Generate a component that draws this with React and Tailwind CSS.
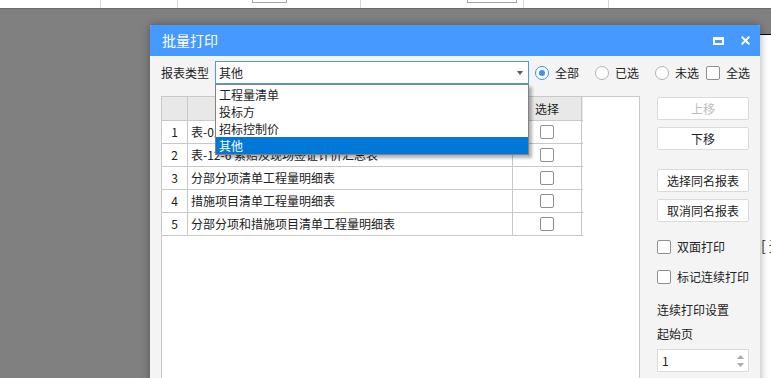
import { X } from 'lucide-react';

const ROWS = [
  { id: 1, name: '表-01 建设项目招标控制价汇总表' },
  { id: 2, name: '表-12-6 索赔及现场签证计价汇总表' },
  { id: 3, name: '分部分项清单工程量明细表' },
  { id: 4, name: '措施项目清单工程量明细表' },
  { id: 5, name: '分部分项和措施项目清单工程量明细表' },
];

const OPTIONS = ['工程量清单', '投标方', '招标控制价', '其他'];

function Box({ className = '' }) {
  return <span className={`block w-[14px] h-[14px] shrink-0 rounded-[2px] border border-[#8f8f8f] bg-white ${className}`} />;
}

function Radio({ checked, label, className = '' }) {
  return (
    <div className={`flex items-center gap-[6px] ${className}`}>
      <span className={`flex w-[14px] h-[14px] items-center justify-center rounded-full border bg-white ${checked ? 'border-[#3f8ff5]' : 'border-[#b4b4b4]'}`}>
        {checked && <span className="block w-[6px] h-[6px] rounded-full bg-[#3f8ff5]" />}
      </span>
      <span>{label}</span>
    </div>
  );
}

function Button({ children, disabled, className = '' }) {
  return (
    <button className={`flex h-[23px] w-full items-center justify-center rounded-[2px] border border-[#dadada] bg-white leading-none ${disabled ? 'text-[#bdbdbd]' : 'text-[#222]'} ${className}`}>
      {children}
    </button>
  );
}

export default function App() {
  return (
    <div className="relative w-[771px] h-[378px] overflow-hidden bg-[#808080] font-['Microsoft_YaHei','Noto_Sans_CJK_SC',sans-serif] text-[12px] text-[#222]">
      {/* page toolbar behind the dialog */}
      <div className="flex h-[9px] border-b border-[#6a6a6a] bg-white">
        <div className="w-[101px] border-r border-[#d6d6d6]" />
        <div className="w-[77px] border-r border-[#d6d6d6]" />
        <div className="w-[183px] border-r border-[#d6d6d6] pl-[74px]">
          <div className="h-[3px] w-[35px] border-x border-b border-[#a8a8a8]" />
        </div>
        <div className="w-[163px] border-r border-[#d6d6d6] pl-[106px]">
          <div className="h-[3px] w-[50px] border-x border-b border-[#a8a8a8]" />
        </div>
        <div className="w-[85px] border-r border-[#d6d6d6]" />
        <div className="flex-1" />
      </div>
      <div className="flex h-[369px]">
        <div className="flex-1" />
        <div className="flex w-[11px] flex-col">
          <div className="h-[25px]" />
          <div className="flex-1 border-t border-black bg-white pl-[1px] pt-[201px] text-[14px] leading-[18px] whitespace-nowrap">[ 无</div>
        </div>
      </div>

      {/* dialog */}
      <div className="absolute left-[150px] top-[25px] flex h-[360px] w-[610px] flex-col overflow-hidden rounded-t-[2px] bg-[#f4f4f4] shadow-[0_0_8px_rgba(0,0,0,0.35)]">
        <div className="flex h-[31px] shrink-0 items-center bg-[#4599ff] pl-[12px] pr-[8px] text-[14px] text-white">
          <span className="flex-1">批量打印</span>
          <span className="block h-[8px] w-[11px] border-2 border-t-[3px] border-white" />
          <X size={13} strokeWidth={3.5} className="ml-[15px]" />
        </div>

        <div className="flex flex-1 flex-col pl-[11px] pt-[5px]">
          {/* report type row */}
          <div className="flex h-[23px] items-center">
            <span className="w-[54px]">报表类型</span>
            <div className="relative h-[23px] w-[314px] border border-[#4599ff] bg-white">
              <div className="flex h-full items-center justify-between pl-[3px] pr-[5px]">
                <span>其他</span>
                <svg width="6" height="4" viewBox="0 0 6 4"><path d="M0 0h6L3 4z" fill="#555" /></svg>
              </div>
              <div className="absolute left-[-1px] top-[22px] z-10 w-[314px] border border-[#828282] bg-white pt-[1px] shadow-[3px_3px_3px_rgba(0,0,0,0.3)]">
                {OPTIONS.map((o) => (
                  <div key={o} className={`flex h-[17px] items-center pl-[3px] ${o === '其他' ? 'bg-[#0078d7] text-white' : ''}`}>{o}</div>
                ))}
              </div>
            </div>
            <Radio checked label="全部" className="ml-[6px]" />
            <Radio label="已选" className="ml-[16px]" />
            <Radio label="未选" className="ml-[16px]" />
            <div className="ml-[7px] flex items-center gap-[6px]">
              <Box />
              <span>全选</span>
            </div>
          </div>

          {/* list and side panel */}
          <div className="mt-[12px] flex flex-1">
            <div className="w-[479px] border border-[#c8c8c8] bg-white">
              <div className="flex h-[24px] w-[421px] border-b border-[#c8c8c8] bg-[#e8e8e8]">
                <div className="w-[26px] border-r border-[#c8c8c8]" />
                <div className="w-[325px] border-r border-[#c8c8c8]" />
                <div className="flex w-[69px] items-center justify-center border-r border-[#c8c8c8]">选择</div>
              </div>
              {ROWS.map((r) => (
                <div key={r.id} className="flex h-[23px] w-[421px] border-b border-[#c8c8c8]">
                  <div className="flex w-[26px] items-center justify-center border-r border-[#c8c8c8]">{r.id}</div>
                  <div className="flex w-[325px] items-center overflow-hidden whitespace-nowrap border-r border-[#c8c8c8] pl-[3px]">{r.name}</div>
                  <div className="flex w-[69px] items-center justify-center border-r border-[#c8c8c8]">
                    <Box className="w-[13px] h-[13px]" />
                  </div>
                </div>
              ))}
            </div>

            <div className="ml-[17px] flex w-[92px] flex-col pt-[1px]">
              <Button disabled>上移</Button>
              <Button className="mt-[7px]">下移</Button>
              <Button className="mt-[19px]">选择同名报表</Button>
              <Button className="mt-[7px]">取消同名报表</Button>
              <div className="mt-[16px] flex items-center gap-[6px] whitespace-nowrap">
                <Box />
                <span>双面打印</span>
              </div>
              <div className="mt-[12px] flex items-center gap-[6px] whitespace-nowrap">
                <Box />
                <span>标记连续打印</span>
              </div>
              <div className="mt-[16px] h-[16px] leading-[16px] whitespace-nowrap">连续打印设置</div>
              <div className="mt-[8px] h-[16px] leading-[16px]">起始页</div>
              <div className="mt-[7px] flex h-[23px] items-center justify-between border border-[#dadada] bg-white pl-[4px] pr-[4px]">
                <span>1</span>
                <div className="flex flex-col gap-[4px]">
                  <svg width="7" height="4" viewBox="0 0 7 4"><path d="M3.5 0L7 4H0z" fill="#aaa" /></svg>
                  <svg width="7" height="4" viewBox="0 0 7 4"><path d="M0 0h7L3.5 4z" fill="#aaa" /></svg>
                </div>
              </div>
            </div>
          </div>
        </div>
      </div>
    </div>
  );
}
